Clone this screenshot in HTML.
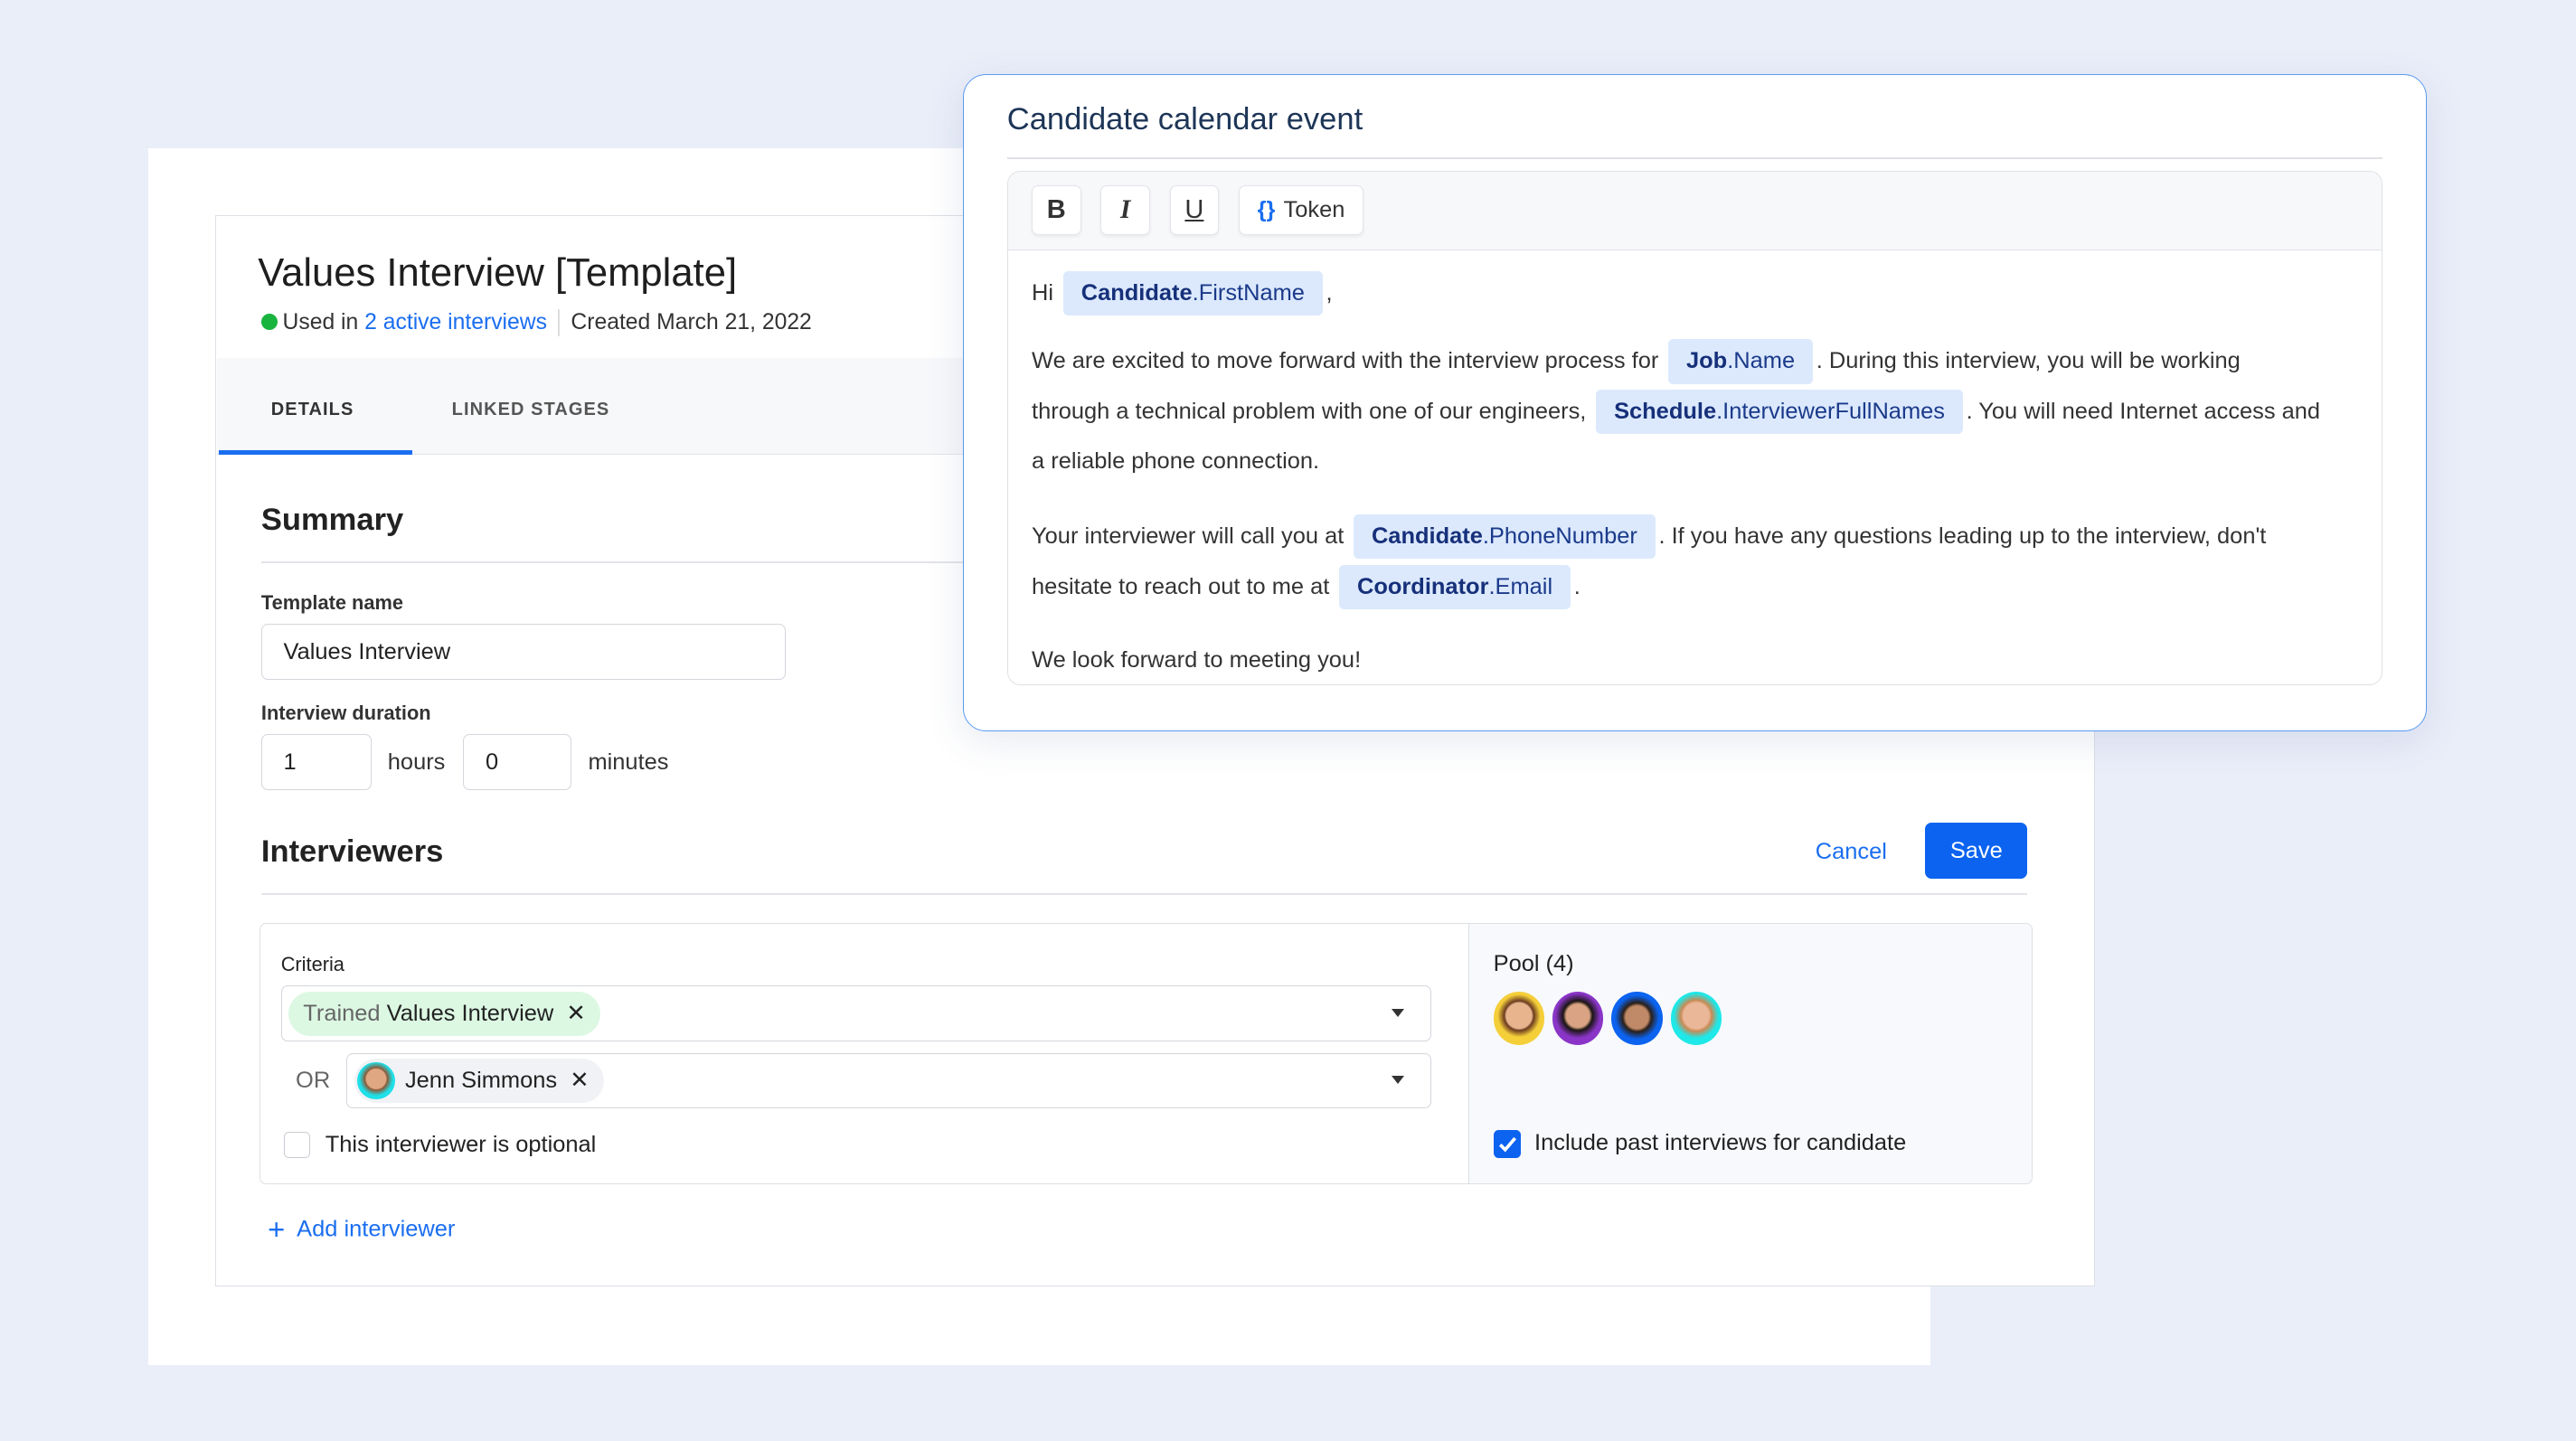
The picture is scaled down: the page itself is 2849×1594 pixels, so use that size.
<!DOCTYPE html>
<html><head><meta charset="utf-8"><style>
*{box-sizing:border-box;margin:0;padding:0}
html,body{width:2849px;height:1594px;overflow:hidden;background:#eaeef9}
#w{position:relative;width:1568px;height:877px;zoom:1.81696;font-family:"Liberation Sans",sans-serif;color:#222}
.a{position:absolute;white-space:nowrap}
.inp{position:absolute;border:1px solid #d3d6dc;border-radius:4px;background:#fff;font-size:14px;color:#222;padding-left:13px;display:flex;align-items:center}
.tok{display:inline-block;background:#dce9fd;color:#1a3a8a;border-radius:3px;padding:0 11px;line-height:27px;margin:0 2px}
.tok b{color:#16307a}
.tb{position:absolute;top:113px;height:30px;background:#fff;border:1px solid #e3e5ea;border-radius:4px;box-shadow:0 1px 2px rgba(0,0,0,.06);display:flex;align-items:center;justify-content:center;font-size:16px;color:#333}
.av{position:absolute;width:31px;height:32px;border-radius:50%;top:604px}
</style></head><body><div id="w">
<div class="a" style="left:90px;top:90px;width:1085px;height:741px;background:#fff"></div>
<div class="a" style="left:131px;top:131px;width:1144px;height:652px;background:#fff;border:1px solid #dcdfe4"></div>
<div class="a" style="left:132px;top:218px;width:1142px;height:59px;background:#f7f8fa;border-bottom:1px solid #e2e4e8"></div>
<div class="a" style="left:133px;top:274px;width:118px;height:3px;background:#1a6ef0"></div>
<div class="a" style="left:157px;top:153px;font-size:24px;color:#1e1e1e">Values Interview [Template]</div>
<div class="a" style="left:159px;top:191px;width:10px;height:10px;border-radius:50%;background:#19b43e"></div>
<div class="a" style="left:172px;top:188px;font-size:13.6px;color:#333">Used in <span style="color:#1a6ef0">2 active interviews</span> <span style="display:inline-block;width:1px;height:17px;background:#ddd;vertical-align:middle;margin:0 3px"></span> Created March 21, 2022</div>
<div class="a" style="left:165px;top:243px;font-size:11px;font-weight:bold;letter-spacing:.6px;color:#333">DETAILS</div>
<div class="a" style="left:275px;top:243px;font-size:11px;font-weight:bold;letter-spacing:.6px;color:#555">LINKED STAGES</div>
<div class="a" style="left:159px;top:306px;font-size:19px;font-weight:600;color:#222">Summary</div>
<div class="a" style="left:159px;top:342px;width:1075px;height:1px;background:#e2e4e8"></div>
<div class="a" style="left:159px;top:360px;font-size:12px;font-weight:bold;color:#333">Template name</div>
<div class="inp" style="left:159px;top:380px;width:319px;height:34px">Values Interview</div>
<div class="a" style="left:159px;top:427px;font-size:12px;font-weight:bold;color:#333">Interview duration</div>
<div class="inp" style="left:159px;top:447px;width:67px;height:34px">1</div>
<div class="a" style="left:236px;top:456px;font-size:14px;color:#333">hours</div>
<div class="inp" style="left:282px;top:447px;width:66px;height:34px">0</div>
<div class="a" style="left:358px;top:456px;font-size:14px;color:#333">minutes</div>
<div class="a" style="left:159px;top:508px;font-size:19px;font-weight:600;color:#222">Interviewers</div>
<div class="a" style="left:1105px;top:511px;font-size:14px;color:#1a6ef0">Cancel</div>
<div class="a" style="left:1172px;top:501px;width:62px;height:34px;border-radius:4px;background:#0b63f0;color:#fff;font-size:14px;display:flex;align-items:center;justify-content:center">Save</div>
<div class="a" style="left:159px;top:544px;width:1075px;height:1px;background:#e2e4e8"></div>
<div class="a" style="left:158px;top:562px;width:1079px;height:159px;border:1px solid #dcdfe4;border-radius:4px;background:#fff;overflow:hidden"><div style="position:absolute;left:735px;top:0;width:344px;height:159px;background:#f7f9fc;border-left:1px solid #dcdfe4"></div></div>
<div class="a" style="left:171px;top:580px;font-size:12px;color:#222">Criteria</div>
<div class="inp" style="left:171px;top:600px;width:700px;height:34px;padding-left:4px"><span style="background:#dcf8e3;border-radius:14px;padding:0 9px;line-height:27px;font-size:14px"><span style="color:#666">Trained</span> Values Interview &nbsp;✕</span></div>
<div class="a" style="left:847px;top:614px;border-left:4px solid transparent;border-right:4px solid transparent;border-top:5px solid #333"></div>
<div class="a" style="left:180px;top:650px;font-size:14px;color:#666">OR</div>
<div class="inp" style="left:211px;top:641px;width:660px;height:34px;padding-left:4px"><span style="background:#f1f2f5;border-radius:14px;padding:0 9px 0 31px;line-height:27px;font-size:14px;position:relative">Jenn Simmons &nbsp;✕<span style="position:absolute;left:2px;top:2px;width:23px;height:23px;border-radius:50%;background:radial-gradient(circle at 50% 45%,#e0a882 35%,#8a5a3a 40%,#1ee0e8 60%)"></span></span></div>
<div class="a" style="left:847px;top:655px;border-left:4px solid transparent;border-right:4px solid transparent;border-top:5px solid #333"></div>
<div class="a" style="left:173px;top:689px;width:16px;height:16px;border:1px solid #c9ccd3;border-radius:3px;background:#fff"></div>
<div class="a" style="left:198px;top:689px;font-size:14px;color:#222">This interviewer is optional</div>
<div class="a" style="left:909px;top:579px;font-size:14px;color:#222">Pool (4)</div>
<div class="av" style="left:909px;background:radial-gradient(circle at 50% 45%,#e8b48e 33%,#6b3a20 38%,#f5cf3a 55%)"></div>
<div class="av" style="left:945px;background:radial-gradient(circle at 50% 45%,#d9a384 30%,#1a1512 38%,#8a35c8 58%)"></div>
<div class="av" style="left:981px;background:radial-gradient(circle at 50% 48%,#c08a68 30%,#2a1f18 38%,#0b63f0 58%)"></div>
<div class="av" style="left:1017px;background:radial-gradient(circle at 50% 45%,#eab898 33%,#c98a55 40%,#1ee8e8 58%)"></div>
<div class="a" style="left:909px;top:688px;width:17px;height:17px;border-radius:3px;background:#0b63f0"><svg width="17" height="17" viewBox="0 0 17 17"><path d="M4 9l3 3 6-7" stroke="#fff" stroke-width="2" fill="none"/></svg></div>
<div class="a" style="left:934px;top:688px;font-size:14px;color:#222">Include past interviews for candidate</div>
<div class="a" style="left:163px;top:738px;font-size:14px;color:#1a6ef0"><span style="font-size:18px;vertical-align:-2px;margin-right:4px">+</span> Add interviewer</div>

<div class="a" style="left:586px;top:45px;width:891px;height:400px;background:#fff;border:1px solid #5a9bf2;border-radius:14px;box-shadow:0 6px 24px rgba(60,80,140,.12)"></div>
<div class="a" style="left:613px;top:62px;font-size:19px;color:#1d3557">Candidate calendar event</div>
<div class="a" style="left:613px;top:96px;width:837px;height:1px;background:#dfe1e5"></div>
<div class="a" style="left:613px;top:104px;width:837px;height:313px;border:1px solid #dfe1e5;border-radius:8px;overflow:hidden"><div style="height:48px;background:#f7f8fa;border-bottom:1px solid #dfe1e5"></div></div>
<div class="tb" style="left:628px;width:30px;font-weight:bold">B</div>
<div class="tb" style="left:670px;width:30px;font-weight:bold;font-style:italic;font-family:'Liberation Serif',serif">I</div>
<div class="tb" style="left:712px;width:30px;text-decoration:underline">U</div>
<div class="tb" style="left:754px;width:76px;font-size:14px"><span style="color:#1a6ef0;font-weight:bold;margin-right:5px">{}</span>Token</div>
<div class="a" style="left:628px;top:165px;font-size:14px;color:#333;line-height:27px">Hi <span class="tok"><b>Candidate</b>.FirstName</span>,</div>
<div class="a" style="left:628px;top:205px;font-size:14px;color:#333;line-height:30.5px">We are excited to move forward with the interview process for <span class="tok"><b>Job</b>.Name</span>. During this interview, you will be working<br>through a technical problem with one of our engineers, <span class="tok"><b>Schedule</b>.InterviewerFullNames</span>. You will need Internet access and<br>a reliable phone connection.</div>
<div class="a" style="left:628px;top:311px;font-size:14px;color:#333;line-height:31px">Your interviewer will call you at <span class="tok"><b>Candidate</b>.PhoneNumber</span>. If you have any questions leading up to the interview, don't<br>hesitate to reach out to me at <span class="tok"><b>Coordinator</b>.Email</span>.</div>
<div class="a" style="left:628px;top:394px;font-size:14px;color:#333">We look forward to meeting you!</div>
</div></body></html>
